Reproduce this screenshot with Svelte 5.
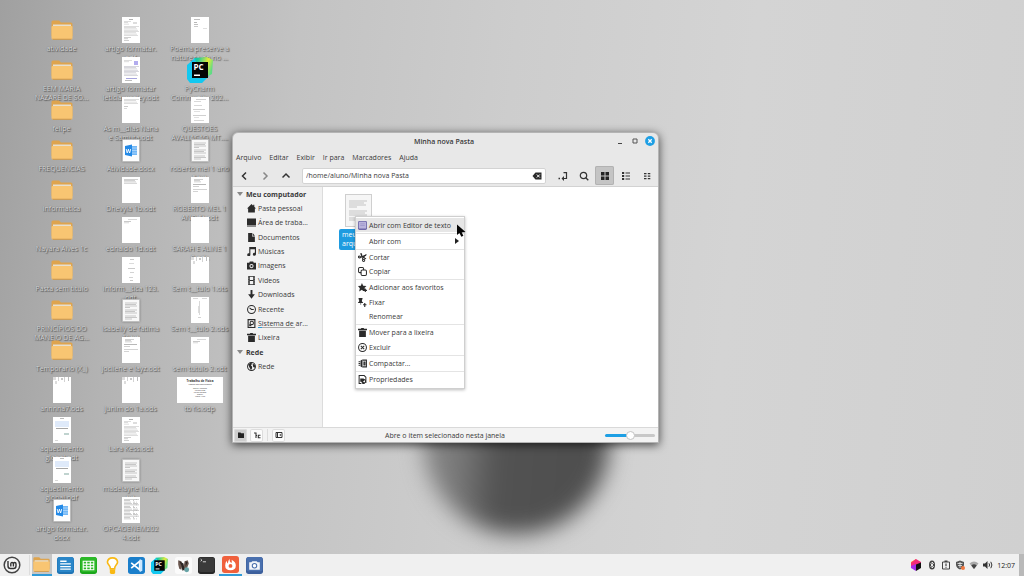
<script>
  const desktop = [
    { k: 'folder', t: ['atividade'] },
    { k: 'folder', t: ['EEM MARIA', 'NAZARÉ DE SO...'] },
    { k: 'folder', t: ['felipe'] },
    { k: 'folder', t: ['FREQUENCIAS'] },
    { k: 'folder', t: ['informatica'] },
    { k: 'folder', t: ['Nayara Alves 1c'] },
    { k: 'folder', t: ['Pasta sem título'] },
    { k: 'folder', t: ['PRINCÍPIOS DO', 'MANEJO DE AG...'] },
    { k: 'folder', t: ['Temporario (X_)'] },
    { k: 'doc', v: 'cells', t: ['annnna7.ods'] },
    { k: 'doc', v: 'blue', t: ['aquecimento', 'global.odt'] },
    { k: 'doc', v: 'blue', t: ['aquecimento', 'global.pdf'] },
    { k: 'word', t: ['artigo formatar.', 'docx'] },
    { k: 'doc', v: 'page', t: ['artigo formatar.', 'pdf'] },
    { k: 'doc', v: 'stamp', t: ['artigo formatar', 'leticia wesley.odt'] },
    { k: 'doc', v: 'short', t: ['As m__dias Nana', 'e Samuta.odt'] },
    { k: 'word', t: ['Atividade.docx'] },
    { k: 'doc', v: 'head', t: ['Dhevyla 1b.odt'] },
    { k: 'doc', v: 'top', t: ['ednaldo 1d.odt'] },
    { k: 'doc', v: 'center', t: ['inform__tica 123.', 'odt'] },
    { k: 'text', t: ['isabelly de fatima', '1º.txt'] },
    { k: 'doc', v: 'half', t: ['jocilene e layz.odt'] },
    { k: 'doc', v: 'cells', t: ['junim do 1a.ods'] },
    { k: 'doc', v: 'page', t: ['Lara Kess.odt'] },
    { k: 'text', t: ['madelayne linda.', 'txt'] },
    { k: 'doc', v: 'dense', t: ['OPCAOENEM202', '4.odt'] },
    { k: 'doc', v: 'poem', t: ['Poema preserve a', 'natureza do no ...'] },
    { k: 'pycharm', t: ['PyCharm', 'Community 202...'] },
    { k: 'doc', v: 'list', t: ['QUESTOES', 'AVALIACAO MT....'] },
    { k: 'text', t: ['roberto mel 1 ano', '5.txt'] },
    { k: 'doc', v: 'half', t: ['ROBERTO MEL 1', 'ANO 5t.odt'] },
    { k: 'doc', v: 'blank', t: ['SARAH E ALINE 1', '0.ods'] },
    { k: 'doc', v: 'cells', t: ['Sem t__tulo 1.ots'] },
    { k: 'doc', v: 'column', t: ['Sem t__tulo 2.ods'] },
    { k: 'doc', v: 'top', t: ['sem tutulo 2.odt'] },
    { k: 'slide', t: ['tb fis.odp'] }
  ];

  // Each thumbnail is a set of strokes: x, y, width, height, colour.
  const rows = (y0, n, step, x, w, c = '#aaa') =>
    Array.from({ length: n }, (_, i) => [x, y0 + i * step, w - ((i * 3) % 4), 0.6, c]);
  const thumbs = {
    page: [[7, 2, 4, 1, '#888'], [11, 5, 4, 2, '#ccc'], ...rows(4, 3, 1.4, 2, 7), ...rows(9, 8, 1.3, 2, 15), ...rows(20, 3, 1.5, 2, 7, '#888')],
    stamp: [[12, 4, 4, 4, '#8a80e6'], ...rows(3, 2, 1.5, 2, 8), ...rows(9, 8, 1.3, 2, 15, '#9a9aa8'), [4, 21, 11, 1, '#7775cc'], [3, 23, 7, 1, '#999']],
    short: [...rows(2, 4, 1.4, 2, 15), [2, 9, 4, 0.7, '#888'], [2, 11, 3, 0.7, '#aaa']],
    head: [...rows(2, 4, 1.3, 2, 14, '#888')],
    top: [[6, 2, 9, 0.7, '#aaa'], [2, 4, 7, 0.7, '#888'], [2, 5.5, 5, 0.7, '#aaa']],
    center: [[8, 2, 4, 0.8, '#999'], [7, 6, 5, 0.8, '#bbb'], [6, 11, 7, 0.8, '#999'], [8, 15, 4, 0.8, '#aaa'], [7, 20, 4, 0.8, '#aaa'], [8, 23, 3, 0.8, '#999']],
    half: [...rows(2, 3, 1.3, 3, 9, '#888'), [2, 7, 13, 0.8, '#777'], [2, 9, 6, 0.7, '#999'], [2, 12, 14, 0.8, '#aaa'], [2, 14, 5, 0.8, '#aaa']],
    cells: [[0, 0, 3, 3, '#ccc'], [5, 0, 1, 4, '#bbb'], [8, 1, 2, 2, '#aaa'], [11, 0, 1, 5, '#bbb'], [15, 0, 1, 4, '#999'], [2, 4, 2, 3, '#ccc']],
    blue: [[7, 1, 4, 1, '#999'], [2, 4, 14, 6, '#cfe0f8'], [3, 11, 12, 1, '#777'], [11, 16, 5, 2, '#9fbcb6'], [2, 23, 3, 0.7, '#aaa']],
    dense: [...rows(2, 15, 1.4, 2, 9, '#888'), ...rows(2, 15, 1.4, 11, 4, '#777'), ...rows(2, 15, 1.4, 14, 3, '#888')],
    poem: [[3, 2, 6, 0.8, '#888'], [3, 5, 3, 0.8, '#777'], [3, 7, 4, 0.8, '#888'], [3, 9, 4, 0.8, '#999'], [12, 11, 4, 0.7, '#bbb']],
    list: [[5, 2, 10, 0.7, '#999'], [3, 4, 7, 0.7, '#aaa'], [3, 8, 8, 0.7, '#aaa'], [2, 12, 12, 0.7, '#999'], [3, 14, 6, 0.7, '#bbb'], [2, 18, 13, 0.7, '#999'], [3, 20, 5, 0.7, '#bbb'], [3, 23, 10, 0.7, '#aaa']],
    column: [[2, 1, 5, 0.7, '#aaa'], [11, 1, 5, 0.7, '#aaa'], [8, 4, 0.7, 14, '#aaa'], [7, 9, 1, 7, '#ccc'], [7, 20, 3, 0.8, '#aaa']],
    blank: []
  };

  const places = [
    ['home', 'Pasta pessoal'], ['desk', 'Área de traba...'], ['file', 'Documentos'], ['music', 'Músicas'],
    ['camera', 'Imagens'], ['film', 'Vídeos'], ['down', 'Downloads'], ['clock', 'Recente'],
    ['disk', 'Sistema de ar...'], ['trash', 'Lixeira']
  ];

  const context = [
    [['editor', 'Abrir com Editor de texto']],
    [['', 'Abrir com']],
    [['cut', 'Cortar'], ['copy', 'Copiar']],
    [['star', 'Adicionar aos favoritos'], ['pin', 'Fixar'], ['', 'Renomear']],
    [['trash', 'Mover para a lixeira'], ['delete', 'Excluir']],
    [['zip', 'Compactar...']],
    [['props', 'Propriedades']]
  ];

  const apps = ['Arquivos', 'Writer', 'Calc', 'Notas', 'Code', 'PyCharm', 'DBeaver', 'Terminal', 'Firefox', 'Captura'];
  let path = '/home/aluno/Minha nova Pasta';
  let zoom = 50;
</script>

{#snippet icon(n)}
  <svg class="ico" viewBox="0 0 16 16" aria-hidden="true">
    {#if n === 'home'}<path d="M8 0 0 8.200h2V15h12V8.200h2L13 5V1.500h-2V3z" />
    {:else if n === 'desk'}<path d="M0 1h16v11.500H0zM0 13.300h16V15H0z" />
    {:else if n === 'file'}<path d="M2 0H9v6h5v10H2zM10 0l4 5h-4z" />
    {:else if n === 'music'}<path d="M4 0h12v12.800a2.800 2.600 0 1 1-2-2.500V4H6v9.800a2.800 2.600 0 1 1-2-2.500z" />
    {:else if n === 'camera'}<path fill-rule="evenodd" d="M5 1h6l1 2h4v12H0V3h4zM8 5.300a3.700 3.700 0 1 0 0 7.400 3.700 3.700 0 0 0 0-7.400z" /><circle cx="8" cy="9" r="2" />
    {:else if n === 'film'}<path fill-rule="evenodd" d="M2 0h12v16H2zM5 1.500v5.700h6V1.500zM5 8.800v5.700h6V8.800z" /><path stroke="#f0f0f0" stroke-dasharray="1.500 1.500" d="M3.300 1v14M12.700 1v14" />
    {:else if n === 'down'}<path d="M6.300 0h3.400v7.500H14L8 15.500 2 7.500h4.300z" />
    {:else if n === 'clock'}<circle class="ln" cx="8" cy="8" r="7" /><path class="ln" d="m4.500 5 3.500 3h4" />
    {:else if n === 'disk'}<path fill-rule="evenodd" d="M1 0h14v16H1zM3 2v12h10V2z" /><circle class="ln" cx="8.500" cy="7" r="3" /><path d="M4 13V8.500L8 12v1z" />
    {:else if n === 'trash'}<path d="M0 1.500h5l1-1.500h4l1 1.500h5V4H0zM2 5h12v11H2z" />
    {:else if n === 'globe'}<circle class="ln" cx="8" cy="8" r="7" /><path d="M2 4.500 7 1l2 2-2 3 2 2v3l-2 3.500L4 9zM10 3l4 2 .500 5L11 9z" />
    {:else if n === 'editor'}<rect width="16" height="16" rx="2.500" fill="#6f68a8" /><rect x="1.500" y="1.500" width="13" height="12" rx="1.500" fill="#b9b3dc" /><path stroke="#8f88c0" d="M4 5h8M4 8h8" />
    {:else if n === 'cut'}<path class="ln" d="m5 1 4 11M14 4 3 8" /><circle class="ln" cx="10" cy="13" r="2" /><circle class="ln" cx="2.500" cy="7" r="1.800" /><path d="m4 0 3 1 1 5 6-4 2 1-5 4 4 3-2 1-5-3z" />
    {:else if n === 'copy'}<rect class="ln" x="1" y="1" width="9" height="9" rx="2" /><rect class="ln fill" x="5.500" y="5.500" width="9.500" height="9.500" rx="2" />
    {:else if n === 'star'}<path d="m7 0 2.200 5 5.800.500-4 4 3 .500v2h2v2h-2v2h-2v-2H9L7 12l-5 3 1.300-5.700L0 5.500 5 5z" />
    {:else if n === 'pin'}<path d="M1 0h7v2L7 3v3l2 2v1H5.500v3h-1V9H0V8l2-2V3L1 2zM11 9h2v2h2v2h-2v3h-2v-3H9v-2h2z" />
    {:else if n === 'delete'}<circle class="ln" cx="8" cy="8" r="7" /><path class="ln" d="m5 5 6 6m0-6-6 6" />
    {:else if n === 'zip'}<path class="ln" d="M8 2h7v12H8M10.500 5.500v5h2v-5z" /><path class="ln" d="M1 5h3M1 8h3M1 11h3" /><path d="M4.500 2.500 8 1v14l-3.500-1.500z" />
    {:else if n === 'props'}<path class="ln" d="M6 15H2V1h9l3 3v10" /><path d="M4 6h6l2 3-3 3 3 3v1H8l-2-4H4z" /><circle class="ln" cx="10.500" cy="11" r="3" />
    {/if}
  </svg>
{/snippet}

{#snippet folder()}
  <svg class="folder" viewBox="0 0 22 20" aria-hidden="true">
    <path fill="#dea44e" d="M.500 2Q.500.500 2 .500h6l2 2h10q1.500 0 1.500 1.500v12h-21z" />
    <path fill="#e6dfd0" d="M2 4.500h18v3H2z" />
    <path fill="#f8c572" d="M.500 7Q.500 6 1.500 6h19q1 0 1 1v11q0 1.500-1.500 1.500H2Q.500 19.500.500 18z" />
    <path fill="#c99548" d="M1 18.800h20l-1 .900H2z" />
  </svg>
{/snippet}

{#snippet pycharm()}
  <svg class="py" viewBox="0 0 26 26" aria-hidden="true">
    <defs><linearGradient id="pyg" x1="0" y1="0" x2="1" y2=".4"><stop offset=".2" stop-color="#18c9a0" /><stop offset=".7" stop-color="#e6ea38" /><stop offset="1" stop-color="#5fdc83" /></linearGradient></defs>
    <path fill="url(#pyg)" d="M7 1 20 0l6 3-1 14-9 5z" />
    <path fill="#12c8f0" d="m0 8 8-7 2 14 12 4-7 7H3l-3-4z" />
    <path fill="#050505" d="M5 5h16v16H5z" />
    <text x="6.500" y="13" font-size="8" font-weight="700" fill="#fff">PC</text>
    <path fill="#fff" d="M7 17.500h6V19H7z" />
  </svg>
{/snippet}

<div class="screen">
  <div class="ball" aria-hidden="true"></div>
  <main class="desktop">
    {#each desktop as d}
      <a class="item" href="#{d.t[0]}">
        <span class="pic">
          {#if d.k === 'folder'}{@render folder()}
          {:else if d.k === 'pycharm'}{@render pycharm()}
          {:else if d.k === 'slide'}
            <svg class="slide" viewBox="0 0 46 26" aria-hidden="true">
              <rect width="46" height="26" fill="#fff" />
              <g text-anchor="middle" fill="#333"><text x="23" y="4.500" font-size="3" font-weight="700">Trabalho de Física</text><text x="23" y="8" font-size="2">Nomes dos participantes</text>
                <text x="23" y="12" font-size="2">Thays Adelania</text><text x="23" y="14" font-size="2">Mirela Dias</text><text x="23" y="16" font-size="2">Felipe Solano</text><text x="23" y="18" font-size="2">Daniel</text><text x="23" y="20" font-size="2">Maria Alice</text></g>
            </svg>
          {:else if d.k === 'word'}
            <svg class="note" viewBox="0 0 18 23" aria-hidden="true">
              <rect x=".5" y=".5" width="17" height="22" fill="#fdfdfd" stroke="#b5b5b5" stroke-width=".5" />
              <path fill="#71b7f6" d="M9 7h6v9H9z" /><path stroke="#c9e4fd" stroke-width=".6" d="M10 9h5M10 11.500h5M10 14h5" />
              <path fill="#2389e6" d="m3 7 7-1.500v12L3 16z" /><text x="3.700" y="13.500" font-size="5.500" font-weight="700" fill="#fff">W</text>
            </svg>
          {:else if d.k === 'text'}
            <svg class="note" viewBox="0 0 18 23" aria-hidden="true">
              <rect x=".5" y=".5" width="17" height="22" fill="#f8f8f8" stroke="#bbb" stroke-width=".7" />
              <path stroke="#b2b2b2" stroke-width=".7" d="M3 4h12M3 5.500h11M3 7h12M3 8.500h5M3 11h12M3 12.500h10M3 14h12M3 17h11M3 18.500h12M3 20h7" />
            </svg>
          {:else}
            <svg class="doc" viewBox="0 0 18 26" aria-hidden="true">
              <rect width="18" height="26" fill="#fff" />
              <g opacity=".65">{#each thumbs[d.v] as r}<rect x={r[0]} y={r[1]} width={r[2]} height={r[3]} fill={r[4]} />{/each}</g>
            </svg>
          {/if}
        </span>
        <span class="name">{#each d.t as line}<span>{line}</span>{/each}</span>
      </a>
    {/each}
  </main>

  <section class="window" aria-label="Minha nova Pasta">
    <header class="title">
      <h1>Minha nova Pasta</h1>
      <div class="winbtns">
        <button aria-label="Minimizar"><svg viewBox="0 0 10 10"><path stroke="#444" d="M3 7.500h4" /></svg></button>
        <button aria-label="Maximizar"><svg viewBox="0 0 10 10"><path fill="none" stroke="#555" d="M3 3h4v4H3z" /></svg></button>
        <button aria-label="Fechar"><svg viewBox="0 0 10 10"><circle cx="5" cy="5" r="4.900" fill="#1e9fe4" /><path stroke="#fff" stroke-width="1.300" d="m3.300 3.300 3.400 3.400m0-3.400L3.300 6.700" /></svg></button>
      </div>
    </header>
    <nav class="menubar">
      {#each ['Arquivo', 'Editar', 'Exibir', 'Ir para', 'Marcadores', 'Ajuda'] as m}<button>{m}</button>{/each}
    </nav>
    <div class="toolbar">
      <button class="tb" aria-label="Voltar"><svg viewBox="0 0 10 10"><path class="arr" d="M6 1.500 2.500 5 6 8.500" /></svg></button>
      <button class="tb dim" aria-label="Avançar"><svg viewBox="0 0 10 10"><path class="arr" d="M2.500 1.500 6 5 2.500 8.500" /></svg></button>
      <button class="tb" aria-label="Subir"><svg viewBox="0 0 10 10"><path class="arr" d="M.500 6.500 4 3l3.500 3.500" /></svg></button>
      <div class="path">
        <input aria-label="Local" bind:value={path} />
        <button aria-label="Limpar"><svg viewBox="0 0 10 8"><path fill="#2b2b2b" d="M3.500.500H9.500v7H3.500L.500 4z" /><path stroke="#fff" d="m4.800 2.500 3 3m0-3-3 3" /></svg></button>
      </div>
      <button class="tb" aria-label="Alternar local"><svg viewBox="0 0 10 10"><path fill="none" stroke="#333" stroke-width="1.200" d="M5.500 1.600h3V7.500H5" /><path fill="#333" d="M6 5v5L3.500 7.500zM.500 6.800H2v1.400H.500z" /></svg></button>
      <button class="tb" aria-label="Pesquisar"><svg viewBox="0 0 10 10"><circle cx="4.500" cy="4.500" r="3.200" fill="none" stroke="#333" stroke-width="1.200" /><path stroke="#333" stroke-width="1.300" d="m7 7 2.300 2.300" /></svg></button>
      <button class="tb on" aria-label="Ícones"><svg viewBox="0 0 10 10"><path fill="#222" d="M1 1h3.500v3.500H1zM5.500 1H9v3.500H5.500zM1 5.500h3.500V9H1zM5.500 5.500H9V9H5.500z" /></svg></button>
      <button class="tb" aria-label="Lista"><svg viewBox="0 0 10 10"><path fill="#333" d="M1 1h2.200v2H1zM1 4h2.200v2H1zM1 7h2.200v2H1zM4.500 1.500H9v1H4.500zM4.500 4.500H9v1H4.500zM4.500 7.500H9v1H4.500z" /></svg></button>
      <button class="tb" aria-label="Compacta"><svg viewBox="0 0 10 10"><path fill="#333" d="M2 2h2.500v1.200H2zM5.800 2h2.500v1.200H5.800zM2 4.500h2.500v1.200H2zM5.800 4.500h2.500v1.200H5.800zM2 7h2.500v1.200H2zM5.800 7h2.500v1.200H5.800z" /></svg></button>
    </div>
    <div class="body">
      <aside class="side">
        <h2><i class="tri"></i>Meu computador</h2>
        {#each places as [i, t]}<a href="#{i}">{@render icon(i)}<span class:disk={i === 'disk'}>{t}</span></a>{/each}
        <h2><i class="tri"></i>Rede</h2>
        <a href="#rede">{@render icon('globe')}<span>Rede</span></a>
      </aside>
      <div class="files">
        <div class="file">
          <svg viewBox="0 0 27 33" aria-hidden="true"><rect x=".5" y=".5" width="26" height="32" fill="#f6f6f6" stroke="#cfcfcf" /><path stroke="#b9b9b9" stroke-width=".8" d="M4 7h18M4 9h15M4 11h17M4 13h8M4 17h18M4 19h16M4 21h18M4 24h15M4 26h16" /></svg>
          <span>meu<br />arquivo</span>
        </div>
      </div>
    </div>
    <footer class="status">
      <button class="sb on" aria-label="Locais"><svg viewBox="0 0 8 8"><path fill="#222" d="M1 1.500h2.500l.500.800H7V7H1z" /></svg></button>
      <button class="sb" aria-label="Árvore"><svg viewBox="0 0 8 8"><path fill="none" stroke="#333" stroke-width="1.100" d="M1 2h2v5M3 4.500h1M7.500 4.300H5.300v2.400h2.200" /></svg></button>
      <i class="div"></i>
      <button class="sb" aria-label="Painel lateral"><svg viewBox="0 0 8 8"><path fill="none" stroke="#333" d="M1 1.500h6v5H1z" /><path fill="#333" d="M2 2h1v4H2zM5.800 2.800v2.400L4.300 4z" /></svg></button>
      <p>Abre o item selecionado nesta janela</p>
      <input type="range" aria-label="Ampliação" min="0" max="100" bind:value={zoom} style="--v:{zoom}%" />
    </footer>
  </section>

  <div class="ctx" role="menu">
    {#each context as group, g}
      {#if g}<hr />{/if}
      {#each group as [i, t]}
        <button role="menuitem" class:hot={g === 0}>{@render icon(i)}<span>{t}</span>{#if g === 1}<i class="sub"></i>{/if}</button>
      {/each}
    {/each}
  </div>
  <svg class="cursor" viewBox="0 0 10 13" aria-hidden="true"><path fill="#050505" d="M1 .500v10.500l2.400-2 2 3.800 2-1L5.700 8.500l3.800-.600z" /></svg>

  <footer class="panel">
    <button class="mint" aria-label="Menu"><svg viewBox="0 0 18 18"><circle cx="9" cy="9" r="7.800" fill="#f4f4f4" stroke="#444" stroke-width="1.500" /><path fill="none" stroke="#333" stroke-width="1.400" d="M5 5v5q0 2.500 2.500 2.500h3q2.500 0 2.500-2.500V8q0-1.500-1.300-1.500T10.400 8v2.500M10.400 8q0-1.500-1.300-1.500T7.800 8v2.500" /></svg></button>
    <div class="apps">
      {#each apps as a, i}
        <button aria-label={a} class:active={i === 0} class:open={i === 8}>
          {#if i === 0}{@render folder()}
          {:else if i === 5}{@render pycharm()}
          {:else}
            <svg viewBox="0 0 16 16">
              {#if i === 1}<rect width="16" height="16" rx="2.500" fill="#1f74b5" /><rect x=".5" width="15" height="14" rx="2" fill="#2a86c8" /><path stroke="#fff" stroke-width="1.200" d="M3 4h6M3 6.500h10M3 9h10M3 11.500h10" />
              {:else if i === 2}<rect width="16" height="16" rx="2.500" fill="#1ba51b" /><rect x=".5" width="15" height="14" rx="2" fill="#2cb928" /><path fill="none" stroke="#fff" d="M3 4h10v8H3zM3 6.700h10M3 9.300h10M6.300 4v8M9.700 4v8" />
              {:else if i === 3}<path fill="#fff" stroke="#f9b914" stroke-width="1.500" d="M6 11Q6 9 4.600 7.500 3.200 6 3.200 4.800 3.700.800 8 .800t4.800 4q0 1.200-1.400 2.700Q10 9 10 11z" /><path fill="#f9b914" d="M5.500 11.500h5v3.500l-1 1h-3l-1-1z" />
              {:else if i === 4}<rect width="16" height="16" rx="2.500" fill="#1b7fcb" /><path fill="none" stroke="#fff" stroke-width="1.600" d="m3 5.500 8 6.500V4L3 10.500" /><path fill="#cfe9ff" d="m11 2 2.500 1v10L11 14z" />
              {:else if i === 6}<rect width="16" height="16" rx="2.500" fill="#fbfbfb" /><path fill="#6b5850" d="m3 3 3 1 1 3-1 5-2-1-1-4zM9 4l3-1 1 3-2 5-2 2-1-3z" /><path fill="#2c2523" d="m4 4 2 4 1 5 2-1-1-6zM10 4l2 1-2 4z" /><circle cx="11" cy="12" r="2.300" fill="#66a3a6" />
              {:else if i === 7}<rect width="16" height="16" rx="2.500" fill="#262626" /><rect x=".5" y=".5" width="15" height="13.500" rx="2" fill="#3a3a3a" /><path fill="none" stroke="#eee" stroke-width=".8" d="m2.500 2 1.200 1-1.200 1M4.500 4.500h3" />
              {:else if i === 8}<rect width="16" height="16" rx="2.500" fill="#f0603c" /><path fill="#fff" d="M7.500 2.500Q6.500 5 9 6.500q.500-1.500 0-3 4 2 4 5.500 0 4.500-5 4.500T3 9q0-3 1.500-4.500 0 2 1 2.500 0-3 2-4.500z" /><circle cx="8" cy="9.300" r="1.800" fill="#f0603c" />
              {:else}<rect width="16" height="16" rx="2.500" fill="#3c5f9c" /><rect x=".5" width="15" height="13.500" rx="2" fill="#4a70ae" /><path fill="#f4f6fa" d="M3 5h2l1-1h4l1 1h2v7H3z" /><circle cx="8" cy="8.300" r="2.100" fill="#fff" stroke="#4a70ae" />
              {/if}
            </svg>
          {/if}
        </button>
      {/each}
    </div>
    <div class="tray">
      <button aria-label="Toolbox" class="wide"><svg viewBox="0 0 12 12"><path fill="#ff7c30" d="m1 3 5-3v6L1 9z" /><path fill="#f52a78" d="m6 0 5 3v4L6 6 1 8V4z" /><path fill="#a42ee8" d="m1 7 5-2v7L1 9z" /><path fill="#111" d="m6 5.500 5-2V9l-5 3z" /></svg></button>
      <button aria-label="Bluetooth"><svg viewBox="0 0 10 10"><ellipse cx="5" cy="5" rx="3" ry="4.600" fill="#444" /><path fill="none" stroke="#fff" stroke-width=".8" d="m3.500 3.500 3 3L5 8V2l1.500 1.500-3 3" /></svg></button>
      <button aria-label="Atualizações"><svg viewBox="0 0 10 10"><path fill="none" stroke="#444" d="M1.500 2h7v7h-7z" /><path fill="#444" d="M3.500.500h3V2h-3zM4.400 3.500h1.200v2.500H4.400zM4.400 6.800h1.200v1H4.400z" /></svg></button>
      <button aria-label="Segurança"><svg viewBox="0 0 10 10"><path fill="#555" d="M5 .500 9 2v3Q8.500 8 5 9.500 1.500 8 1 5V2z" /><path stroke="#eee" stroke-width=".8" fill="none" d="M2.500 3.500h5M3 5.500h4M5 2v6" /><circle cx="8" cy="8" r="2" fill="#f07840" /></svg></button>
      <button aria-label="Rede sem fio"><svg viewBox="0 0 10 10"><path fill="#aaa" d="M.500 3.500Q5-.500 9.500 3.500L5 9z" /><path fill="#444" d="M2.300 5.500Q5 3.200 7.700 5.500L5 9z" /></svg></button>
      <button aria-label="Volume"><svg viewBox="0 0 10 10"><path fill="#333" d="M0 3.500h2L4.500 1v8L2 6.500H0z" /><path fill="none" stroke="#333" d="M6 3.300q1.200 1.700 0 3.400M7.800 1.800q2.200 3.200 0 6.400" /></svg></button>
      <time>12:07</time>
      <i class="show"></i>
    </div>
  </footer>
</div>

<style>
  :global(body) { background: #cbcbcb; }
  .screen {
    position: relative; display: flex; flex-direction: column; height: 100vh; overflow: hidden;
    font: 7px/9px "Open Sans", "Noto Sans", sans-serif; color: #3a3a3a;
    background: linear-gradient(96deg, #a0a0a0 0%, #b3b3b3 13%, #c3c3c3 28%, #cdcdcd 48%, #d4d4d4 70%, #d0d0d0 100%);
  }
  .screen :is(button, input) { font: inherit; color: inherit; border: 0; padding: 0; margin: 0; background: none; }
  svg { display: block; flex: none; }
  a { color: inherit; text-decoration: none; }
  h1, h2, p { margin: 0; font-size: inherit; }
  .ball {
    position: absolute; left: 423px; top: 350px; width: 186px; height: 184px; border-radius: 50%; filter: blur(11px);
    background: linear-gradient(95deg, #8a8a8a 0%, #7a7a7a 22%, #525252 42%, #4d4d4d 100%);
  }
  .desktop {
    flex: 1; display: grid; grid-auto-flow: column; grid-template-rows: repeat(13, 40px); grid-auto-columns: 69px;
    align-content: start; padding: 17px 27px 0;
  }
  .item { display: flex; flex-direction: column; align-items: center; position: relative; height: 40px; }
  .pic { display: flex; align-items: center; justify-content: center; height: 26px; flex: none; }
  .folder { width: 22px; height: 20px; }
  .py, .slide { height: 26px; }
  .doc { width: 18px; height: 26px; }
  .note { width: 18px; height: 23px; filter: drop-shadow(0 0 1px #0005); }
  .name {
    display: flex; flex-direction: column; align-items: center; white-space: nowrap; padding-top: 1px;
    color: #d6d6d6; line-height: 9px; text-shadow: 1px 1px 1px #555, 0 0 1px #666;
  }
  .window {
    position: absolute; left: 232px; top: 132px; width: 427px; height: 311px; display: flex; flex-direction: column;
    background: #e8e8e8; border: 1px solid #b4b4b4; border-radius: 6px 6px 0 0; box-sizing: border-box;
    box-shadow: 0 2px 10px #000a; overflow: hidden;
  }
  .title { display: grid; grid-template-columns: 1fr auto 1fr; align-items: center; height: 16px; padding-right: 3px; }
  .title h1 { grid-column: 2; font-weight: 600; }
  .winbtns { display: flex; justify-content: end; gap: 5px; }
  .winbtns svg { width: 10px; height: 10px; }
  .menubar { display: flex; gap: 8px; padding: 0 3px; height: 16px; align-items: center; }
  .toolbar { display: flex; align-items: center; gap: 2px; height: 21px; padding: 0 2px; border-bottom: 1px solid #d2d2d2; }
  .tb { display: grid; place-items: center; width: 19px; height: 19px; border-radius: 2px; }
  .tb svg { width: 10px; height: 10px; }
  .screen .tb.on { background: #c4c4c4; box-shadow: inset 0 0 0 1px #b2b2b2; }
  .arr { fill: none; stroke: #333; stroke-width: 1.5; }
  .dim .arr { stroke: #888; }
  .path { flex: 1; display: flex; align-items: center; height: 16px; margin: 0 5px 0 4px; padding: 0 3px; box-sizing: border-box; background: #fff; border: 1px solid #d3d3d3; border-radius: 2px; }
  .path input { flex: 1; min-width: 0; outline: 0; }
  .path svg { width: 10px; height: 8px; }
  .body { flex: 1; display: flex; min-height: 0; background: #fff; }
  .side {
    width: 90px; height: 100%; box-sizing: border-box; background: #f1f1f1; border-right: 1px solid #dcdcdc;
    display: grid; align-content: start; grid-template-rows: repeat(13, minmax(14px, 6%));
  }
  .side > * { display: flex; align-items: center; height: 14px; }
  .side h2 { gap: 3px; padding-left: 4px; font-weight: 700; }
  .side a { gap: 2px; padding-left: 14px; white-space: nowrap; }
  .tri { border: 3px solid transparent; border-top: 4px solid #888; border-bottom: 0; }
  .ico { width: 9px; height: 9px; fill: #2b2b2b; }
  .ico .ln { fill: none; stroke: #2b2b2b; stroke-width: 1.8; }
  .ico .fill { fill: #fff; }
  .disk { background: linear-gradient(90deg, #2c9bd8 10%, #aaa 10%) left bottom / 37px 1px no-repeat; }
  .files { flex: 1; padding: 7px 16px; }
  .file { display: flex; flex-direction: column; align-items: center; width: 38px; gap: 2px; }
  .file svg { width: 27px; height: 33px; }
  .file span { align-self: stretch; background: #1e9be0; color: #fff; border-radius: 2px; padding: 1px 3px 2px; }
  .status { display: flex; align-items: center; gap: 3px; height: 14px; padding: 0 3px 0 1px; background: #f3f3f3; border-top: 1px solid #d9d9d9; }
  .status p { flex: 1; text-align: center; }
  .sb { width: 13px; height: 13px; display: grid; place-items: center; }
  .screen .sb { background: #fcfcfc; box-shadow: inset 0 0 0 1px #ddd; border-radius: 2px; }
  .screen .sb.on { background: #cdcdcd; }
  .sb svg { width: 8px; height: 8px; }
  .div { width: 1px; height: 12px; background: #ddd; margin: 0 1px; }
  input[type='range'] { appearance: none; width: 50px; height: 10px; }
  input[type='range']::-webkit-slider-runnable-track { height: 3px; border-radius: 2px; background: linear-gradient(90deg, #1e9fe4 var(--v), #c8c8c8 var(--v)); }
  input[type='range']::-webkit-slider-thumb { appearance: none; width: 9px; height: 9px; margin-top: -3px; border-radius: 50%; background: #fff; border: 1px solid #c4c4c4; box-sizing: border-box; }
  .ctx {
    position: absolute; left: 355px; top: 216px; width: 110px; height: 173px; box-sizing: border-box; padding: 1px 0 2px;
    display: flex; flex-direction: column; justify-content: space-between; background: #fff; border: 1px solid #cfcfcf; box-shadow: 0 1px 3px #0004;
  }
  .ctx button { display: flex; align-items: center; gap: 2px; height: 14px; padding: 0 5px 0 2px; white-space: nowrap; }
  .ctx span { flex: 1; text-align: left; }
  .ctx hr { width: 100%; margin: 0; border: 0; height: 1px; background: #e4e4e4; }
  .ctx button.hot { background: #e6e6e6; }
  .sub { border: 3px solid transparent; border-left: 4px solid #222; border-right: 0; }
  .cursor { position: absolute; left: 456px; top: 224px; width: 10px; height: 13px; }
  .panel { position: relative; display: flex; align-items: stretch; height: 22px; background: #f0f0f0; flex: none; }
  .mint { width: 24px; display: grid; place-items: center; }
  .mint svg { width: 18px; height: 18px; }
  .apps { display: grid; grid-template-columns: repeat(10, 1fr); width: 236px; margin-left: 6px; box-shadow: -2px 0 0 -1px #ddd; }
  .apps button { display: grid; place-items: center; box-sizing: border-box; }
  .apps svg { width: 17px; height: 17px; }
  .screen .active { background: #c6c6c6; margin: 0 2px; }
  .screen :is(.active, .open) { border-bottom: 2px solid #2f9bd8; }
  .tray { margin-left: auto; display: flex; align-items: center; gap: 4px; }
  .tray svg { width: 10px; height: 10px; }
  .tray .wide svg { width: 12px; height: 12px; }
  .tray .wide { margin-right: 1px; }
  time { font-size: 7px; line-height: 9px; color: #222; }
  .show { align-self: stretch; width: 5px; background: #b9b9b9; }
</style>
